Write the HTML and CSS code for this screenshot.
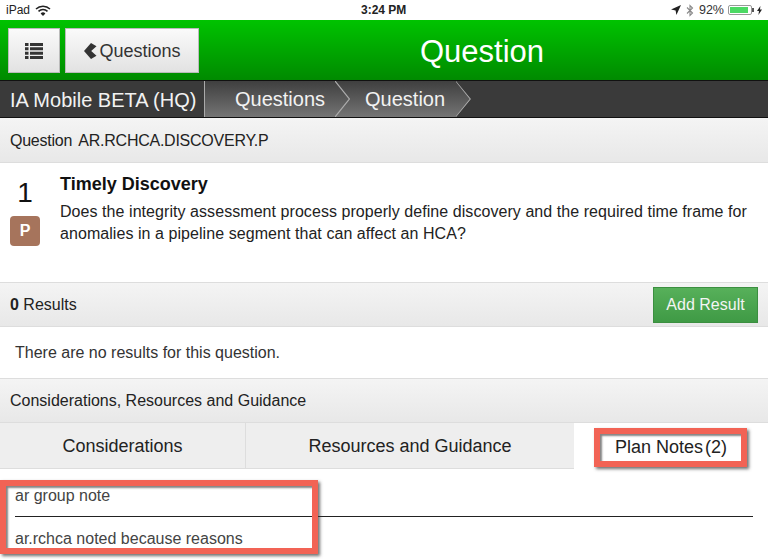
FILE: index.html
```html
<!DOCTYPE html>
<html lang="en">
<head>
  <meta charset="UTF-8">
  <meta name="viewport" content="width=device-width, initial-scale=1.0">
  <title>Question</title>
  <link rel="stylesheet" href="styles.css">
</head>
<body>
  <div class="status">
    <div class="status-left">
      <span>iPad</span>
      <svg width="16" height="11" viewBox="0 0 16 11"><path d="M1 4a10 10 0 0 1 14 0" fill="none" stroke="#222" stroke-width="1.5"/><path d="M3.5 6.4a6.4 6.4 0 0 1 9 0" fill="none" stroke="#222" stroke-width="1.5"/><path d="M8 11 5.6 8.4a3.4 3.4 0 0 1 4.8 0z" fill="#222"/></svg>
    </div>
    <div class="status-time">3:24 PM</div>
    <div class="status-right">
      <svg width="10" height="10" viewBox="0 0 10 10"><path d="M10 0 0 4.6l4.6.8.8 4.6z" fill="#222"/></svg>
      <svg class="bt" width="8" height="13" viewBox="0 0 8 13"><path d="M1 3.500 6.500 9 4 11.500v-10L6.500 4 1 9.500" fill="none" stroke="#888" stroke-width="1.100"/></svg>
      <span class="pct">92%</span>
      <span class="battery"><span class="battery-fill"></span></span>
      <span class="battery-nub"></span>
      <svg width="5" height="9" viewBox="0 0 5 9"><path d="M3.4 0 0 5h2L1.4 9 5 3.6H3z" fill="#222"/></svg>
    </div>
  </div>

  <header class="topbar">
    <button class="btn-top btn-menu">
      <svg width="18" height="16" viewBox="0 0 18 16"><path d="M0 0h3.500v3H0zM5 0h13v3H5zM0 4.300h3.500v3H0zM5 4.300h13v3H5zM0 8.700h3.500v3H0zM5 8.700h13v3H5zM0 13h3.500v3H0zM5 13h13v3H5z" fill="#333"/></svg>
    </button>
    <button class="btn-top btn-back">
      <svg width="15" height="16" viewBox="0 0 15 16"><path d="M0 8 7 0 12.500 3.200 7.200 8l5.300 4.800L7 16z" fill="#333"/></svg>
      <span>Questions</span>
    </button>
    <h1>Question</h1>
  </header>

  <nav class="crumbs">
    <div class="crumb-home">IA Mobile BETA (HQ)</div>
    <div class="crumb-trail">
      <span class="crumb crumb-first">Questions</span>
      <svg class="chevron" width="15" height="36" viewBox="0 0 15 36"><path d="M0 0 14.500 18 0 36" fill="none" stroke="#aaa" stroke-width="1.200"/></svg>
      <span class="crumb">Question</span>
      <svg class="chevron" width="15" height="36" viewBox="0 0 15 36"><path d="M0 0 14.500 18 0 36" fill="none" stroke="#aaa" stroke-width="1.200"/></svg>
    </div>
  </nav>

  <div class="bar bar-question">Question AR.RCHCA.DISCOVERY.P</div>

  <section class="question">
    <div class="question-side">
      <div class="question-num">1</div>
      <div class="badge">P</div>
    </div>
    <div class="question-body">
      <h2>Timely Discovery</h2>
      <p>Does the integrity assessment process properly define discovery and the required time frame for anomalies in a pipeline segment that can affect an HCA?</p>
    </div>
  </section>

  <div class="bar bar-results">
    <span><b>0</b> Results</span>
    <button class="btn-add">Add Result</button>
  </div>
  <div class="empty">There are no results for this question.</div>

  <div class="bar bar-section">Considerations, Resources and Guidance</div>

  <div class="tabs">
    <div class="tab tab-one">Considerations</div>
    <div class="tab tab-two">Resources and Guidance</div>
    <div class="tab tab-active"><span>Plan Notes</span><span>(2)</span></div>
  </div>

  <div class="notes">
    <div class="note note-first">ar group note</div>
    <div class="note">ar.rchca noted because reasons</div>
  </div>

  <div class="callout callout-tab"></div>
  <div class="callout callout-notes"></div>
</body>
</html>
```

FILE: styles.css
```css
html, body {
  margin: 0;
  padding: 0;
}

body {
  width: 768px;
  height: 559px;
  overflow: hidden;
  position: relative;
  background: #fff;
  font-family: "Liberation Sans", Arial, sans-serif;
  color: #222;
}

.status {
  height: 20px;
  display: flex;
  align-items: center;
  justify-content: space-between;
  padding: 0 6px;
  font-size: 12px;
  position: relative;
}

.status-left, .status-right {
  display: flex;
  align-items: center;
  gap: 5px;
}

.status-time {
  position: absolute;
  left: 361px;
  font-weight: bold;
}

.status-right {
  gap: 3px;
}

.bt {
  margin: 0 2px;
}

.pct {
  color: #333;
  font-size: 12.500px;
  margin-right: 1px;
}

.battery {
  width: 24px;
  height: 10px;
  border: 1px solid #999;
  padding: 1px;
  box-sizing: border-box;
  border-radius: 2px;
  display: block;
}

.battery-fill {
  display: block;
  height: 100%;
  width: 92%;
  background: #4cd964;
}

.battery-nub {
  width: 2px;
  height: 4px;
  margin-left: -3px;
  background: #555;
}

.topbar {
  height: 61px;
  box-sizing: border-box;
  border-bottom: 1px solid #111;
  background: linear-gradient(to bottom, #00c300, #008a00);
  display: flex;
  align-items: flex-start;
  gap: 5px;
  padding: 8px 0 0 8px;
  position: relative;
}

.topbar h1 {
  position: absolute;
  left: 420px;
  top: 14px;
  margin: 0;
  font-size: 31px;
  line-height: 36px;
  font-weight: normal;
  color: #fff;
}

.btn-top {
  height: 45px;
  border: 1px solid #bbb;
  background: linear-gradient(to bottom, #fafafa, #e2e2e2);
  display: flex;
  align-items: center;
  justify-content: center;
  padding: 0;
  color: #333;
  font-family: inherit;
  font-size: 18px;
}

.btn-menu {
  width: 52px;
}

.btn-back {
  width: 134px;
  padding-left: 1px;
}

.btn-back span {
  padding-top: 2px;
}

.crumbs {
  height: 37px;
  box-sizing: border-box;
  border-bottom: 1px solid #111;
  background: #3a3a3a;
  display: flex;
  color: #f2f2f2;
  font-size: 20px;
}

.crumb-home {
  width: 205px;
  box-sizing: border-box;
  padding-left: 10px;
  line-height: 38px;
  border-right: 1px solid #aaa;
}

.crumb-trail {
  display: flex;
  align-items: center;
  width: 266px;
  background: linear-gradient(to bottom, #3f3f3f, #747474);
  clip-path: polygon(0 0, 251px 0, 266px 50%, 251px 100%, 0 100%);
}

.crumb {
  padding: 0 11px 0 15px;
  line-height: 38px;
  white-space: nowrap;
}

.crumb-first {
  padding-left: 30px;
  padding-right: 10px;
}

.chevron {
  flex: none;
}

.bar {
  box-sizing: border-box;
  display: flex;
  align-items: center;
  padding: 0 10px;
  background: linear-gradient(to bottom, #f4f4f4, #e8e8e8);
  border-bottom: 1px solid #ddd;
  font-size: 16px;
  color: #222;
}

.bar-question {
  height: 45px;
  padding-top: 2px;
  letter-spacing: -0.25px;
  word-spacing: 3px;
}

.question {
  height: 119px;
  box-sizing: border-box;
  display: flex;
  padding-top: 9px;
}

.question-side {
  width: 50px;
  display: flex;
  flex-direction: column;
  align-items: center;
  flex: none;
}

.question-num {
  font-size: 28px;
  line-height: 42px;
  color: #111;
}

.badge {
  width: 30px;
  height: 30px;
  margin-top: 2px;
  border-radius: 4px;
  background: #a6745c;
  color: #fff;
  font-weight: bold;
  font-size: 16px;
  line-height: 30px;
  text-align: center;
}

.question-body {
  padding: 0 10px;
}

.question-body h2 {
  margin: 0;
  font-size: 18px;
  line-height: 24px;
  color: #111;
}

.question-body p {
  margin: 0;
  font-size: 16px;
  line-height: 22px;
  padding-top: 5px;
  letter-spacing: 0.06px;
  color: #222;
}

.bar-results {
  height: 45px;
  justify-content: space-between;
  border-top: 1px solid #ddd;
}

.btn-add {
  width: 105px;
  height: 36px;
  background: linear-gradient(to bottom, #57b05a, #3f9a45);
  border: 1px solid #3b8f40;
  color: #f4f4f4;
  font-family: inherit;
  font-size: 16px;
  padding: 0;
}

.empty {
  height: 51px;
  box-sizing: border-box;
  padding-left: 15px;
  font-size: 16px;
  line-height: 51px;
  color: #333;
}

.bar-section {
  height: 45px;
  border-top: 1px solid #ddd;
}

.tabs {
  display: flex;
  height: 46px;
  font-size: 18px;
  color: #222;
}

.tab {
  box-sizing: border-box;
  display: flex;
  align-items: center;
  justify-content: center;
  padding-top: 2px;
}

.tab-one, .tab-two {
  background: #eee;
  border-bottom: 1px solid #ddd;
}

.tab-one {
  width: 246px;
  border-right: 1px solid #ddd;
}

.tab-two {
  width: 328px;
}

.tab-active {
  width: 194px;
  gap: 2px;
  white-space: nowrap;
}

.notes {
  padding: 15px 15px 0;
  font-size: 16px;
  color: #444;
}

.note {
  line-height: 24px;
}

.note-first {
  height: 32px;
  margin-bottom: 10px;
  border-bottom: 1px solid #222;
}

.callout {
  position: absolute;
  box-sizing: border-box;
  border: 6px solid #f26355;
  box-shadow: 2px 2px 3px rgba(50, 50, 50, 0.7), inset 2px 2px 2px rgba(50, 50, 50, 0.6);
}

.callout-tab {
  left: 594px;
  top: 428px;
  width: 153px;
  height: 39px;
}

.callout-notes {
  left: 0;
  top: 480px;
  width: 318px;
  height: 74px;
}
```
